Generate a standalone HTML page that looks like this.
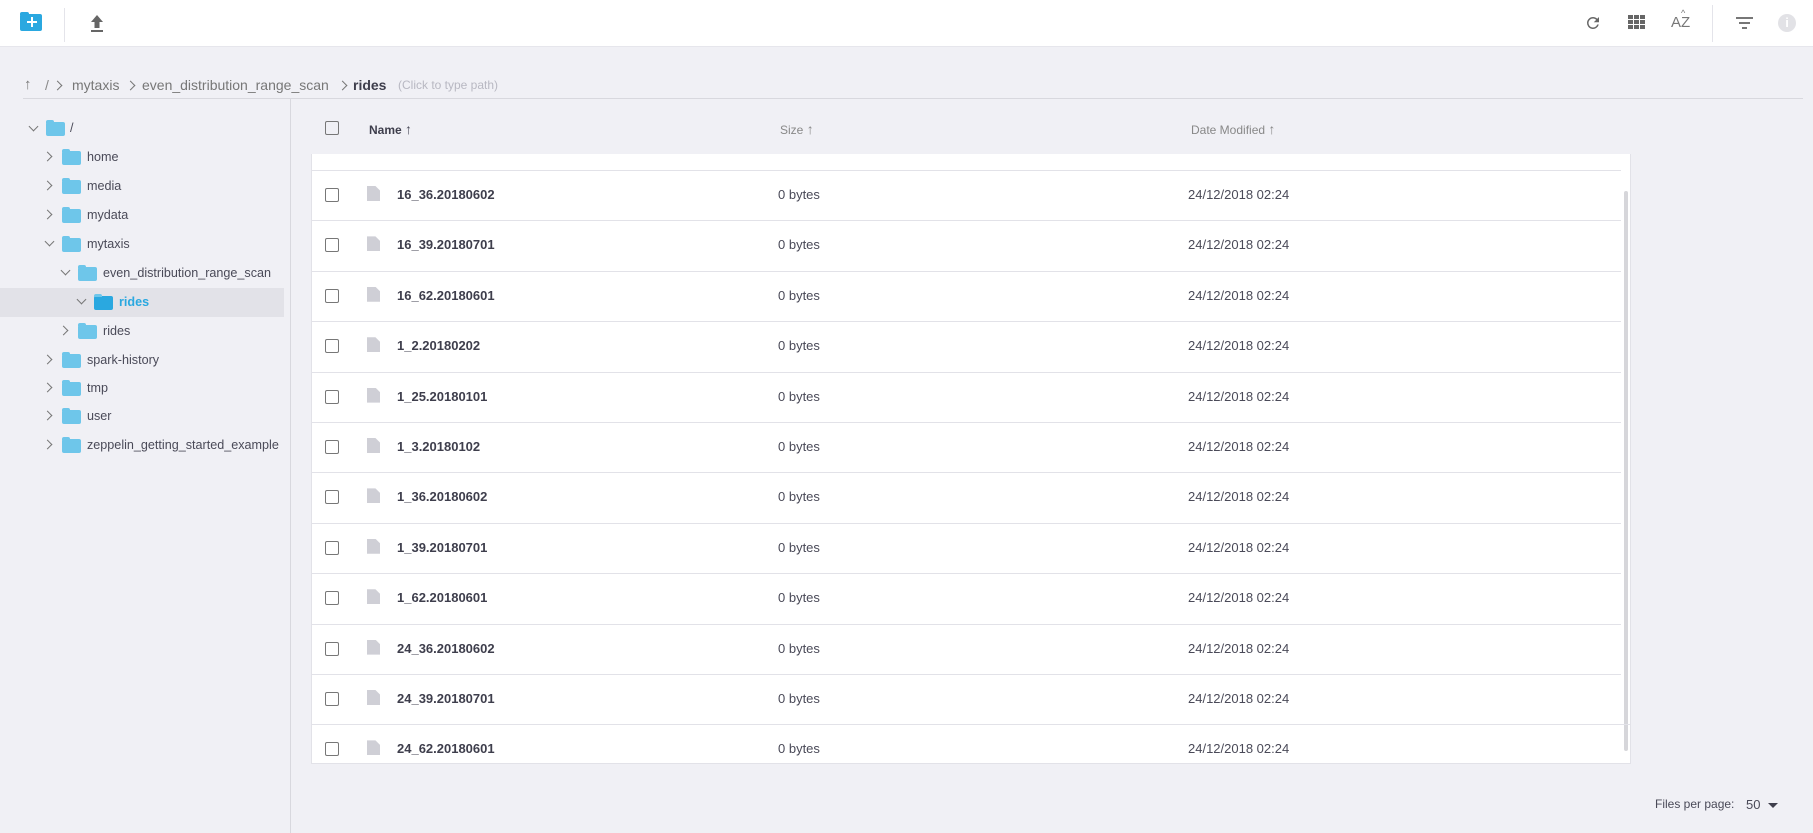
<!DOCTYPE html>
<html><head><meta charset="utf-8"><style>
*{box-sizing:border-box;margin:0;padding:0}
body{width:1813px;height:833px;background:#f0f0f5;font-family:"Liberation Sans",sans-serif;color:#4a4a58;position:relative;overflow:hidden;font-size:13px}
.abs{position:absolute}
.top{left:0;top:0;width:1813px;height:47px;background:#fff;border-bottom:1px solid #e6e6ec}
.vd{width:1px;background:#e4e4ea}
.fold{width:19px;height:14px;background:#6ec6ea;border-radius:2px}
.fold:before{content:"";position:absolute;left:0;top:-2px;width:8px;height:3px;background:#6ec6ea;border-radius:2px 2px 0 0}
.chev{width:7px;height:7px;border-right:1.5px solid #777;border-bottom:1.5px solid #777}
.tx{font-size:13px;color:#4a4a58;white-space:nowrap}
.tr{font-size:12.6px}
.bc{font-size:14px}
.cb{width:14px;height:14px;border:1.5px solid #777;border-radius:2px;background:#fff}
.row{left:311px;width:1320px;height:1px;background:#e2e2e8}
.fi{width:13px;height:15px;background:#cfcfd6;clip-path:polygon(0 0,65% 0,100% 30%,100% 100%,0 100%)}
b{font-weight:bold;color:#3e3e4c}
</style></head><body>
<div class="abs top"></div>
<div class="abs" style="left:20px;top:14px;width:22px;height:17px;background:#2aa8e0;border-radius:2px"></div>
<div class="abs" style="left:20px;top:12px;width:9px;height:3px;background:#2aa8e0;border-radius:2px 2px 0 0"></div>
<div class="abs" style="left:27px;top:21px;width:10px;height:2px;background:#fff"></div>
<div class="abs" style="left:31px;top:17px;width:2px;height:10px;background:#fff"></div>
<div class="abs vd" style="left:64px;top:8px;height:34px"></div>
<svg class="abs" style="left:88px;top:14px" width="18" height="20" viewBox="0 0 18 20"><path d="M9 1 L3 8 H6.5 V14 H11.5 V8 H15 Z" fill="#666"/><rect x="3" y="16" width="12" height="2" fill="#666"/></svg>
<svg class="abs" style="left:1584px;top:14px" width="18" height="18" viewBox="0 0 24 24"><path d="M17.65 6.35A7.96 7.96 0 0 0 12 4a8 8 0 1 0 7.73 10h-2.08A6 6 0 1 1 12 6c1.66 0 3.14.69 4.22 1.78L13 11h7V4l-2.35 2.35z" fill="#666"/></svg>
<svg class="abs" style="left:1628px;top:15px" width="17" height="15" viewBox="0 0 17 15"><g fill="#666"><rect x="0" y="0" width="5" height="4"/><rect x="6" y="0" width="5" height="4"/><rect x="12" y="0" width="5" height="4"/><rect x="0" y="5" width="5" height="4"/><rect x="6" y="5" width="5" height="4"/><rect x="12" y="5" width="5" height="4"/><rect x="0" y="10" width="5" height="4"/><rect x="6" y="10" width="5" height="4"/><rect x="12" y="10" width="5" height="4"/></g></svg>
<div class="abs" style="left:1671px;top:14px;font-size:15px;color:#777">AZ</div>
<div class="abs" style="left:1681px;top:8px;font-size:9px;color:#777">^</div>
<div class="abs vd" style="left:1712px;top:5px;height:37px"></div>
<div class="abs" style="left:1736px;top:17px;width:17px;height:2px;background:#777"></div>
<div class="abs" style="left:1739px;top:22px;width:11px;height:2px;background:#777"></div>
<div class="abs" style="left:1742px;top:27px;width:5px;height:2px;background:#777"></div>
<div class="abs" style="left:1778px;top:14px;width:18px;height:18px;border-radius:50%;background:#e2e2e6;color:#fff;font-size:13px;font-weight:bold;text-align:center;line-height:18px">i</div>
<div class="abs tx" style="left:24px;top:76px;font-size:15px;color:#777">↑</div>
<div class="abs tx bc" style="left:45px;top:77px;color:#888">/</div>
<div class="abs chev" style="left:54px;top:82px;transform:rotate(-45deg)"></div>
<div class="abs tx bc" style="left:72px;top:77px;color:#777">mytaxis</div>
<div class="abs chev" style="left:127px;top:82px;transform:rotate(-45deg)"></div>
<div class="abs tx bc" style="left:142px;top:77px;color:#777">even_distribution_range_scan</div>
<div class="abs chev" style="left:339px;top:82px;transform:rotate(-45deg)"></div>
<div class="abs tx bc" style="left:353px;top:77px"><b>rides</b></div>
<div class="abs tx" style="left:398px;top:78px;font-size:12px;color:#b8b8c2">(Click to type path)</div>
<div class="abs" style="left:23px;top:98px;width:1780px;height:1px;background:#d8d8de"></div>
<div class="abs" style="left:290px;top:98px;width:1px;height:735px;background:#d8d8de"></div>
<div class="abs" style="left:0;top:288px;width:284px;height:29px;background:#e2e2e8"></div>
<div class="abs chev" style="left:30px;top:123px;transform:rotate(45deg)"></div><div class="abs fold" style="left:46px;top:122px"></div><div class="abs tx tr" style="left:70px;top:121px">/</div>
<div class="abs chev" style="left:44px;top:153px;transform:rotate(-45deg)"></div><div class="abs fold" style="left:62px;top:151px"></div><div class="abs tx tr" style="left:87px;top:150px">home</div>
<div class="abs chev" style="left:44px;top:182px;transform:rotate(-45deg)"></div><div class="abs fold" style="left:62px;top:180px"></div><div class="abs tx tr" style="left:87px;top:179px">media</div>
<div class="abs chev" style="left:44px;top:211px;transform:rotate(-45deg)"></div><div class="abs fold" style="left:62px;top:209px"></div><div class="abs tx tr" style="left:87px;top:208px">mydata</div>
<div class="abs chev" style="left:46px;top:238px;transform:rotate(45deg)"></div><div class="abs fold" style="left:62px;top:238px"></div><div class="abs tx tr" style="left:87px;top:237px">mytaxis</div>
<div class="abs chev" style="left:62px;top:267px;transform:rotate(45deg)"></div><div class="abs fold" style="left:78px;top:267px"></div><div class="abs tx tr" style="left:103px;top:266px">even_distribution_range_scan</div>
<div class="abs chev" style="left:78px;top:296px;transform:rotate(45deg)"></div><div class="abs fold" style="left:94px;top:296px;background:#2aa8e0"></div><div class="abs tx tr" style="left:119px;top:295px;color:#2aa8e0;font-weight:bold">rides</div>
<div class="abs chev" style="left:60px;top:327px;transform:rotate(-45deg)"></div><div class="abs fold" style="left:78px;top:325px"></div><div class="abs tx tr" style="left:103px;top:324px">rides</div>
<div class="abs chev" style="left:44px;top:356px;transform:rotate(-45deg)"></div><div class="abs fold" style="left:62px;top:354px"></div><div class="abs tx tr" style="left:87px;top:353px">spark-history</div>
<div class="abs chev" style="left:44px;top:384px;transform:rotate(-45deg)"></div><div class="abs fold" style="left:62px;top:382px"></div><div class="abs tx tr" style="left:87px;top:381px">tmp</div>
<div class="abs chev" style="left:44px;top:412px;transform:rotate(-45deg)"></div><div class="abs fold" style="left:62px;top:410px"></div><div class="abs tx tr" style="left:87px;top:409px">user</div>
<div class="abs chev" style="left:44px;top:441px;transform:rotate(-45deg)"></div><div class="abs fold" style="left:62px;top:439px"></div><div class="abs tx tr" style="left:87px;top:438px">zeppelin_getting_started_example</div>
<div class="abs cb" style="left:325px;top:121px;background:transparent"></div>
<div class="abs tx" style="left:369px;top:121px;font-size:12px"><b>Name</b> <span style="font-size:14px">↑</span></div>
<div class="abs tx" style="left:780px;top:121px;font-size:12px;color:#888">Size <span style="font-size:14px">↑</span></div>
<div class="abs tx" style="left:1191px;top:121px;font-size:12px;color:#888">Date Modified <span style="font-size:14px">↑</span></div>
<div class="abs" style="left:311px;top:154px;width:1320px;height:610px;background:#fff;border:1px solid #e2e2e8;border-top:none"></div>
<div class="abs" style="left:1624px;top:191px;width:4px;height:560px;background:#d6d6da;border-radius:2px"></div>
<div id="rows"></div>
<script>
var n=["16_36.20180602","16_39.20180701","16_62.20180601","1_2.20180202","1_25.20180101","1_3.20180102","1_36.20180602","1_39.20180701","1_62.20180601","24_36.20180602","24_39.20180701","24_62.20180601"];
var h="";
for(var i=0;i<12;i++){var s=170+i*50.4;var c=s+25;
h+='<div class="abs row" style="top:'+s+'px;width:'+(i==11?1320:1310)+'px"></div>';
h+='<div class="abs cb" style="left:325px;top:'+(c-7)+'px"></div>';
h+='<div class="abs fi" style="left:367px;top:'+(c-9)+'px"></div>';
h+='<div class="abs tx" style="left:397px;top:'+(c-8)+'px"><b>'+n[i]+'</b></div>';
h+='<div class="abs tx" style="left:778px;top:'+(c-8)+'px">0 bytes</div>';
h+='<div class="abs tx" style="left:1188px;top:'+(c-8)+'px">24/12/2018 02:24</div>';}
document.getElementById("rows").innerHTML=h;
</script>
<div class="abs tx" style="left:1655px;top:797px;font-size:12px">Files per page:</div>
<div class="abs tx" style="left:1746px;top:797px">50</div>
<div class="abs" style="left:1768px;top:803px;border-left:5px solid transparent;border-right:5px solid transparent;border-top:5px solid #3e3e4c"></div>
</body></html>
